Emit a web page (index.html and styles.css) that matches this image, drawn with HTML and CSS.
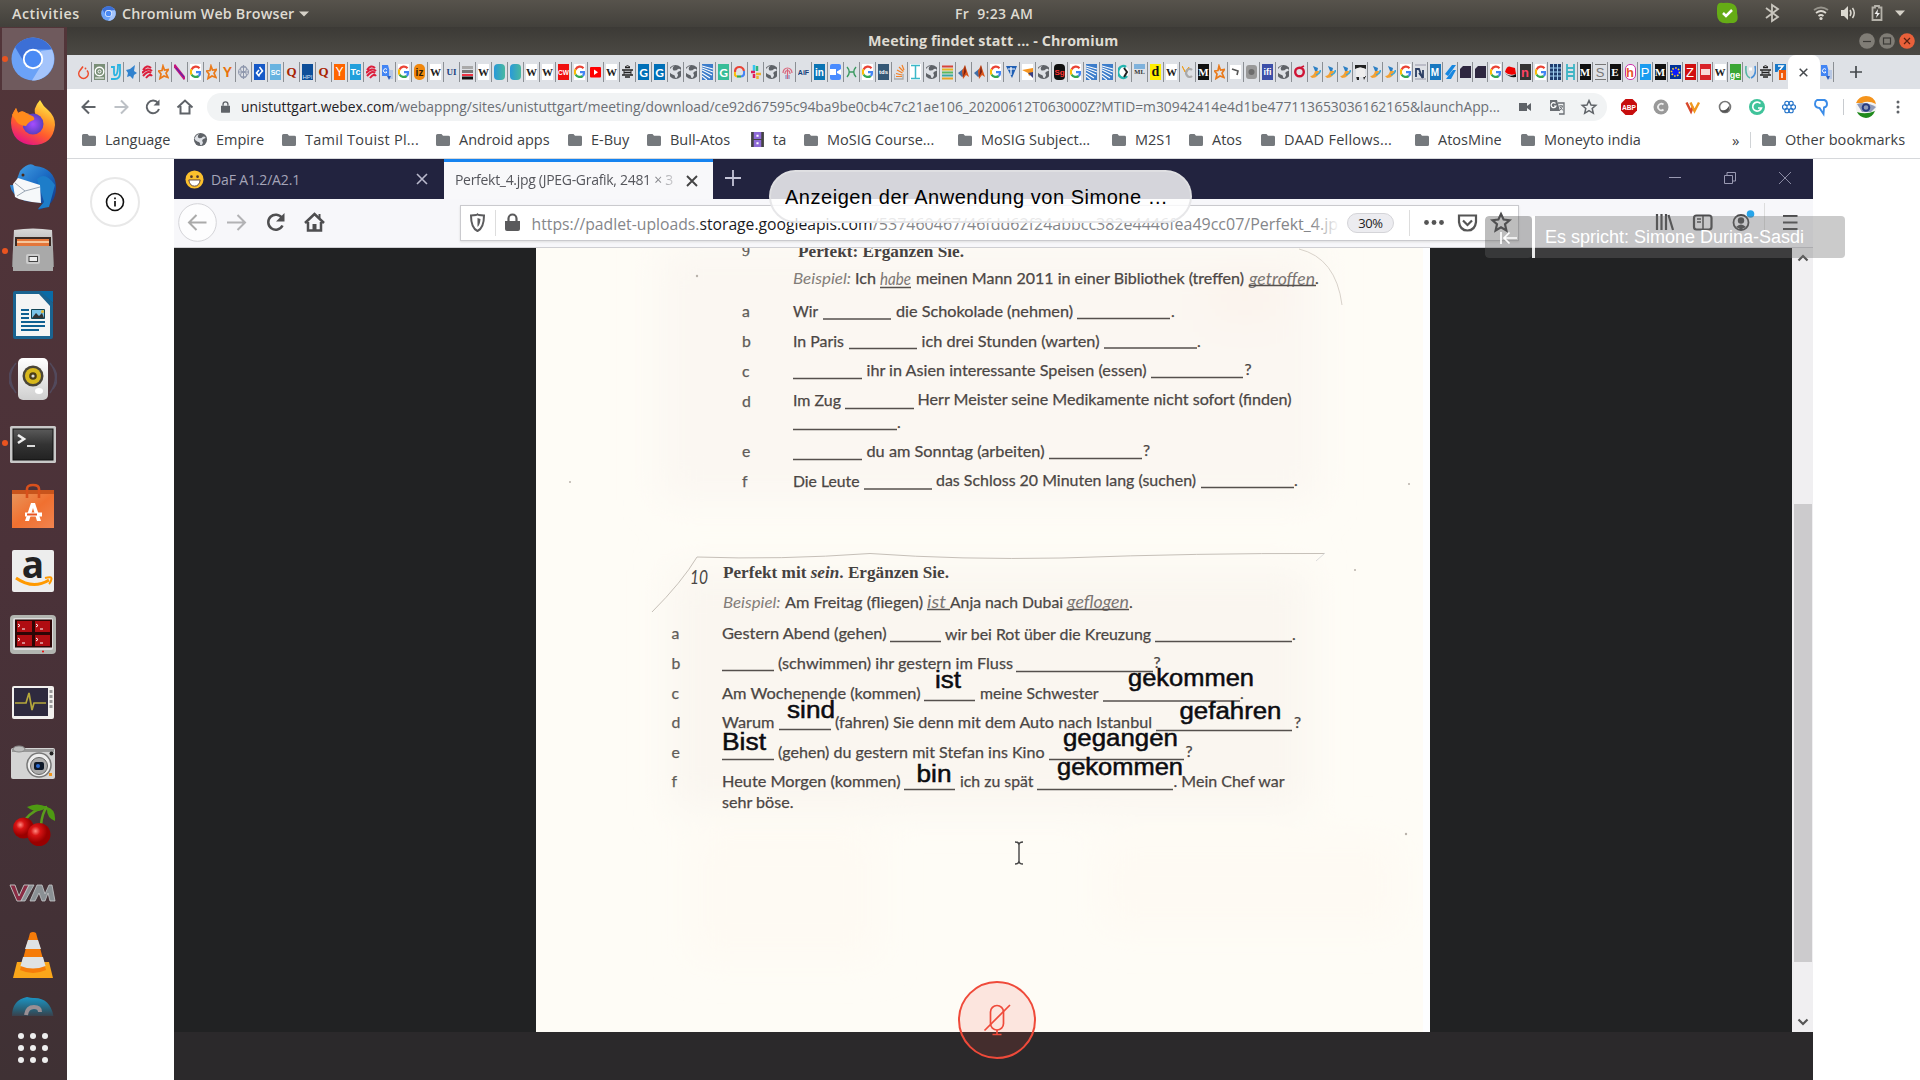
FILE: index.html
```html
<!DOCTYPE html>
<html lang="de">
<head>
<meta charset="utf-8">
<title>Meeting findet statt ... - Chromium</title>
<link rel="stylesheet" href="styles.css">
</head>
<body>
<svg class="defs" aria-hidden="true">
  <defs>
    <linearGradient id="gFox" x1="0.8" y1="0" x2="0.3" y2="1"><stop offset="0" stop-color="#fff44f"/><stop offset=".35" stop-color="#ffa02a"/><stop offset=".65" stop-color="#ff5a2e"/><stop offset="1" stop-color="#e3108a"/></linearGradient>
    <radialGradient id="gOrb"><stop offset="0" stop-color="#a64cff"/><stop offset="1" stop-color="#5a3fc0"/></radialGradient>
    <linearGradient id="gGrey" x1="0" y1="0" x2="0" y2="1"><stop offset="0" stop-color="#d8d8d8"/><stop offset="1" stop-color="#8e8e8e"/></linearGradient>
    <linearGradient id="gLight" x1="0" y1="0" x2="0" y2="1"><stop offset="0" stop-color="#fff"/><stop offset="1" stop-color="#cfcfcf"/></linearGradient>
    <linearGradient id="gDark" x1="0" y1="0" x2="0" y2="1"><stop offset="0" stop-color="#5a5a5a"/><stop offset=".5" stop-color="#333"/><stop offset="1" stop-color="#222"/></linearGradient>
    <linearGradient id="gBag" x1="0" y1="0" x2="1" y2="1"><stop offset="0" stop-color="#e8945a"/><stop offset=".5" stop-color="#f07030"/><stop offset="1" stop-color="#f08450"/></linearGradient>
    <linearGradient id="gBird" x1="0" y1="0" x2="1" y2="1"><stop offset="0" stop-color="#4aa8e8"/><stop offset=".5" stop-color="#1c6cc4"/><stop offset="1" stop-color="#14307c"/></linearGradient>
    <radialGradient id="gCherry" cx=".35" cy=".35"><stop offset="0" stop-color="#ff8a80"/><stop offset=".4" stop-color="#d81414"/><stop offset="1" stop-color="#900"/></radialGradient>
    <linearGradient id="gSkype" x1="0" y1="0" x2="0" y2="1"><stop offset="0" stop-color="#1c96c6"/><stop offset=".6" stop-color="#2a5d72"/><stop offset="1" stop-color="#433238"/></linearGradient>
    <linearGradient id="gTeal" x1="0" y1="0" x2="1" y2="0"><stop offset="0" stop-color="#2a9ad8"/><stop offset="1" stop-color="#48b8a0"/></linearGradient>
    <linearGradient id="gFade" x1="0" y1="0" x2="1" y2="0"><stop offset="0" stop-color="#fff" stop-opacity="0"/><stop offset="1" stop-color="#fff"/></linearGradient>

    <symbol id="chromium" viewBox="0 0 44 44"><circle cx="22" cy="22" r="21.5" fill="#6ba2f7"/><path d="M4 10A21.5 21.5 0 0 1 41 12.500L22 12.500 13.500 26Z" fill="#3c6fd6"/><path d="M40.800 12.500A21.500 21.500 0 0 1 21 43.500L31 27 30 14Z" fill="#a4c4fb"/><circle cx="22" cy="22" r="10.200" fill="#fff"/><circle cx="22" cy="22" r="8.300" fill="#4a8af4"/></symbol>
    <symbol id="folder" viewBox="0 0 14 12"><path d="M1.500 0H5.500L7 1.800H12.500Q14 1.800 14 3.200V10.500Q14 12 12.500 12H1.500Q0 12 0 10.500V1.500Q0 0 1.500 0Z" fill="#75797d"/></symbol>
    <symbol id="globe" viewBox="0 0 16 16" preserveAspectRatio="xMidYMid slice"><circle cx="8" cy="8" r="7" fill="#5f6368"/><path d="M7 1.500Q4 4 6 6.500 9 7 10.500 5 13 4 13.500 6.500 9 8 10 10 11.500 11 9 14L7.500 13.500Q8 11 5 10.500 2 9 1.500 7 3 3 7 1.500Z" fill="#dee1e6"/></symbol>

    <symbol id="f-flame" viewBox="0 0 11 16"><path d="M5 2.500L2 6.500A4.700 4.700 0 1 0 9 6.500" fill="none" stroke="#ee4c2c" stroke-width="1.600"/><circle cx="7.500" cy="4.500" r=".9" fill="#ee4c2c"/></symbol>
    <symbol id="f-swirl" viewBox="0 0 11 16"><path d="M0 0H11V16H0Z" fill="#7a8f78"/><circle cx="5.500" cy="7.500" r="4.300" fill="none" stroke="#fff" stroke-width="1.400"/><circle cx="5.500" cy="7.500" r="1.500" fill="none" stroke="#fff"/><path d="M1 14H10" stroke="#fff"/></symbol>
    <symbol id="f-u" viewBox="0 0 11 16"><path d="M1 3H4V9Q4 12 6 11 8 9 8 1H10V9Q10 15 5 15H1" fill="none" stroke="#2bb3e0" stroke-width="1.800"/></symbol>
    <symbol id="f-bird" viewBox="0 0 11 16"><path d="M0 6L4 5 9 1 8 7 11 9 8 11 7 15 4 12 1 13 2 9Z" fill="#3182ce"/></symbol>
    <symbol id="f-red" viewBox="0 0 11 16"><path d="M1 6Q5 0 9 4M0 9Q6 3 10 7M1 12Q6 6 9 9M4 14Q8 9 10 12" fill="none" stroke="#dc1f3c" stroke-width="2"/></symbol>
    <symbol id="f-star" viewBox="0 0 11 16"><path d="M5 2L6.500 6 10.500 5.500 8 9 10 13.500 6 12 2 14.500 3 10 .5 7 4 6.500Z" fill="none" stroke="#ea7a1a" stroke-width="1.700"/></symbol>
    <symbol id="f-feather" viewBox="0 0 11 16"><path d="M0 1L11 15" stroke="#c3147c" stroke-width="3"/><path d="M2 4L10 13" stroke="#3b2bc0"/></symbol>
    <symbol id="f-g" viewBox="0 0 11 16"><path d="M0 0H11V16H0Z" fill="#fff"/><g fill="none" stroke-width="2.200"><path d="M9.500 4.200A4.900 5.200 0 0 0 1.600 5.400" stroke="#ea4335"/><path d="M1.600 5.400A5 5 0 0 0 1.600 10.600" stroke="#fbbc05"/><path d="M1.600 10.600A5 5 0 0 0 8.800 12" stroke="#34a853"/><path d="M8.800 12A5 5 0 0 0 10 8.200H6" stroke="#4285f4"/></g></symbol>
    <symbol id="f-knot" viewBox="0 0 11 16"><circle cx="5.500" cy="8" r="5" fill="none" stroke="#8d96ac"/><circle cx="5.500" cy="5" r="3" fill="none" stroke="#8d96ac"/><circle cx="5.500" cy="11" r="3" fill="none" stroke="#8d96ac"/><path d="M5.500 1V15M1 8H10" stroke="#8d96ac"/></symbol>
    <symbol id="f-dia" viewBox="0 0 11 16"><path d="M0 0H11V16H0Z" fill="#1659c7"/><path d="M5.500 3L8.500 7 4 12M5 6L2.500 9 5.500 12.500" fill="none" stroke="#fff" stroke-width="1.600"/></symbol>
    <symbol id="f-sf" viewBox="0 0 11 16"><path d="M0 0H11V16H0Z" fill="#3d7dca"/><path d="M0 2L11 5M0 4L11 8M0 6L10 11M0 9L8 14M0 12L5 16" stroke="#fff" stroke-width="1.100"/></symbol>
    <symbol id="f-tr" viewBox="0 0 11 16"><path d="M0 1H6L9 12H0Z" fill="#4285f4"/><path d="M7 6H11V15H7Z" fill="#b7c7e4"/><path d="M5 12H9L7 16Z" fill="#2b5fc0"/><path d="M5 5.500A2 2 0 1 0 5 8H3.500" stroke="#fff" fill="none"/></symbol>
    <symbol id="f-bars" viewBox="0 0 11 16"><path d="M0 2H11V5H0Z" fill="#aaa"/><path d="M0 6H11V9H0Z" fill="#777"/><path d="M0 10H11V12H0Z" fill="#e34"/><path d="M0 12.500H11V15.500H0Z" fill="#111"/></symbol>
    <symbol id="f-teal" viewBox="0 0 11 16"><rect width="11" height="16" rx="4" fill="url(#gTeal)"/></symbol>
    <symbol id="f-yt" viewBox="0 0 11 16"><rect y="3" width="11" height="10.500" rx="1" fill="#f00"/><path d="M4 5.500L8 8.200 4 11Z" fill="#fff"/></symbol>
    <symbol id="f-bee" viewBox="0 0 11 16"><path d="M3 3.500H8M0 6H11M2 8.500H9M0 11H11M3 13H8" stroke="#222" stroke-width="1.300"/><path d="M3 3L5.500 1.500 8 3M2 6V11M9 6V11" stroke="#333" fill="none"/></symbol>
    <symbol id="f-cloud" viewBox="0 0 11 16"><path d="M1 8Q1 3 5.500 3 9 3 10 7" fill="none" stroke="#ea4335" stroke-width="2.200"/><path d="M1 8Q0 12 3 12.500" fill="none" stroke="#fbbc05" stroke-width="2.200"/><path d="M3 12.500H7" stroke="#34a853" stroke-width="2.200"/><path d="M7 12.500Q11 12 10 7" fill="none" stroke="#4285f4" stroke-width="2.200"/></symbol>
    <symbol id="f-slack" viewBox="0 0 11 16"><path d="M4 1V7" stroke="#36c5f0" stroke-width="2.500"/><path d="M7 7V2" stroke="#2eb67d" stroke-width="2.500"/><path d="M1 8H5M4 10V14" stroke="#e01e5a" stroke-width="2.500"/><path d="M6 10H11M7.500 12V15" stroke="#ecb22e" stroke-width="2.500"/></symbol>
    <symbol id="f-tree" viewBox="0 0 11 16"><path d="M1 9A4.500 5 0 1 1 10 9M3 10A2.500 3.500 0 1 1 8 10M5.500 5V15" fill="none" stroke="#d9667c" stroke-width="1.200"/><path d="M4 11V15M7 11V15" stroke="#7a7fc0"/></symbol>
    <symbol id="f-zoom" viewBox="0 0 11 16"><rect width="11" height="16" rx="2" fill="#4a8cff"/><path d="M0 5H6V11H0ZM7 7.500L11 5V11L7 9Z" fill="#fff"/></symbol>
    <symbol id="f-x" viewBox="0 0 11 16"><path d="M1 3Q5.500 8 1 13M10 3Q5.500 8 10 13M3 8H8" fill="none" stroke="#3c9a62" stroke-width="1.400"/></symbol>
    <symbol id="f-so" viewBox="0 0 11 16"><path d="M0 10V15H9V10" fill="none" stroke="#aaa" stroke-width="1.300"/><path d="M2 12.500H8M2 9.500L8 11M3 6L8.500 9M5 3L9.500 7.500M8 1L10 6" stroke="#f48024" stroke-width="1.200"/></symbol>
    <symbol id="f-i" viewBox="0 0 11 16"><path d="M0 0H11V16H0Z" fill="#fff"/><path d="M1 1.500H10M1 14.500H10M5.500 2V14" stroke="#3bb8c8" stroke-width="1.500"/></symbol>
    <symbol id="f-stack" viewBox="0 0 11 16"><path d="M0 2.500H11" stroke="#d8443a" stroke-width="2"/><path d="M0 5.500H11" stroke="#e6b422" stroke-width="2"/><path d="M0 8.500H11" stroke="#5cb85c" stroke-width="2"/><path d="M0 11.500H11" stroke="#3aa8a0" stroke-width="2"/><path d="M0 14.500H11" stroke="#e6a422" stroke-width="2"/></symbol>
    <symbol id="f-mat" viewBox="0 0 11 16"><path d="M0 9L5 5 6 12 4 13Z" fill="#3f6fa8"/><path d="M4 7L7 1 11 13 8 11 5 15Z" fill="#d9541a"/><path d="M7 1L8 8 5 13Z" fill="#7c2112"/></symbol>
    <symbol id="f-tri" viewBox="0 0 11 16"><path d="M0 2H11L6 14Z" fill="#1f5fb4"/><path d="M2 5H9M5 3V11" stroke="#fff" stroke-width="1.200"/></symbol>
    <symbol id="f-swoosh" viewBox="0 0 11 16"><path d="M0 0H11V16H0Z" fill="#fff"/><path d="M0 6L11 4V9L7 12 6 9Z" fill="#f5941f"/><path d="M6 9L11 8V14Z" fill="#3a3e80"/></symbol>
    <symbol id="f-moon" viewBox="0 0 11 16"><circle cx="5.500" cy="8" r="5.500" fill="#fff"/><path d="M8 3A5 6 0 1 0 9 12" stroke="#25b5b0" stroke-width="2.500" fill="none"/><path d="M6 4L9 8 6 13" stroke="#222" stroke-width="2" fill="none"/></symbol>
    <symbol id="f-yc" viewBox="0 0 11 16"><path d="M0 2L3 8 7 3 4 9Z" fill="#f0c020" stroke="#f0a020"/><path d="M10 6A3.500 4 0 1 0 10 12" fill="none" stroke="#aaa" stroke-width="2.200"/></symbol>
    <symbol id="f-white" viewBox="0 0 11 16"><path d="M0 1H11V15H0Z" fill="#fff"/><path d="M2 5L8 7 7 11" fill="none" stroke="#555" stroke-width="1.600"/></symbol>
    <symbol id="f-blot" viewBox="0 0 11 16"><rect y="1" width="11" height="14" rx="3" fill="#999"/><circle cx="5.500" cy="8" r="3" fill="#6d6d6d"/></symbol>
    <symbol id="f-o" viewBox="0 0 11 16"><circle cx="5.500" cy="8" r="4.300" fill="none" stroke="#cf1434" stroke-width="2.400"/><path d="M6 4L10 2" stroke="#cf1434" stroke-width="1.500"/></symbol>
    <symbol id="f-duck" viewBox="0 0 11 16"><path d="M3 2L8 4 7 8 5 7Z" fill="#2c7fc4"/><path d="M0 12Q4 12 5 7L9 7Q9 14 2 14Z" fill="#f2a033"/><path d="M6 11Q10 10 10.500 6" stroke="#3ba7d8" stroke-width="1.800" fill="none"/></symbol>
    <symbol id="f-panda" viewBox="0 0 11 16"><path d="M0 1H11V5Q5 2 0 5ZM1 12H4V16H2ZM8 12H11L9 16Z" fill="#222"/><path d="M1 5Q5 2 10 5V13H1Z" fill="#eee"/></symbol>
    <symbol id="f-in2" viewBox="0 0 11 16"><path d="M0 1H11M0 15H11" stroke="#99a" stroke-width="1"/><path d="M1 13V5H4L7 13H8V6M4 9L8 14" fill="none" stroke="#2c3e63" stroke-width="1.800"/></symbol>
    <symbol id="f-zz" viewBox="0 0 11 16"><path d="M0 10L7 1H11L3 12ZM1 15L8 6H11L6 15Z" fill="#1787e0"/></symbol>
    <symbol id="f-fold" viewBox="0 0 11 16"><path d="M0 5L3 2H11V14H0Z" fill="#2e2740"/></symbol>
    <symbol id="f-hat" viewBox="0 0 11 16"><path d="M0 8Q2 1 6 3L10 4 11 10Q4 12 0 8Z" fill="#e00"/><path d="M0 9Q5 14 11 10V13Q4 14 0 9Z" fill="#111"/></symbol>
    <symbol id="f-grid" viewBox="0 0 11 16"><path d="M0 0H11V16H0Z" fill="#1f3d6e"/><path d="M0 4H11M0 8H11M0 12H11M3.500 0V16M7.500 0V16" stroke="#9fd0f0" stroke-width="1"/></symbol>
    <symbol id="f-ladder" viewBox="0 0 11 16"><path d="M2 0V16M9 0V16M2 4H9M2 8H9M2 12H9" stroke="#3fb5c5" stroke-width="1.800"/></symbol>
    <symbol id="f-eu" viewBox="0 0 11 16"><path d="M0 1H11V15H0Z" fill="#039"/><circle cx="5.500" cy="8" r="4" fill="#0a1cff" stroke="#ffdb28" stroke-width="1.700" stroke-dasharray="1.500 1.500"/></symbol>
    <symbol id="f-rb" viewBox="0 0 11 16"><path d="M0 0H11V16H0Z" fill="#d8232a"/><path d="M1 5H10V11H1Z" fill="#f7dada"/></symbol>
    <symbol id="f-arc" viewBox="0 0 11 16"><path d="M1 2Q0 12 5 14" stroke="#55b5a5" fill="none" stroke-width="1.600"/><path d="M10 2Q12 11 6 14" stroke="#4a90d8" fill="none" stroke-width="1.600"/><path d="M4 5L7 5" stroke="#fff" stroke-width="3"/></symbol>
    <symbol id="f-zo" viewBox="0 0 11 16"><path d="M0 0H11V8H0Z" fill="#1878c8"/><path d="M3 2H8L4 7H9" stroke="#fff" stroke-width="1.500" fill="none"/><path d="M4 6H11V16H4Z" fill="#f05a0a"/><path d="M7 9V14" stroke="#fff" stroke-width="1.500"/></symbol>
  </defs>
</svg>

<div class="desktop">
  <header class="topbar">
    <span class="activities">Activities</span>
    <svg class="app-ico"><use href="#chromium"/></svg>
    <span class="appname">Chromium Web Browser</span>
    <svg class="caret" viewBox="0 0 10 6"><path d="M0 .5H10L5 5.500Z" fill="#d5d1c8"/></svg>
    <span class="clock">Fr&nbsp; 9:23 AM</span>
    <svg class="tray" viewBox="1712 0 208 27">
      <path d="M1717 8Q1717 2 1723 3 1738 1 1737 13 1740 24 1730 23 1717 25 1717 14Z" fill="#65ac16"/><path d="M1723 13L1726 16 1732 10" stroke="#fff" stroke-width="2.500" fill="none"/>
      <path d="M1766 8L1778 17 1772 21V5L1778 9 1766 18" fill="none" stroke="#c9c6be" stroke-width="1.800"/>
      <g fill="none" stroke="#dcd9d1" stroke-width="1.800"><path d="M1814 10Q1821 5 1828 10" stroke="#97948c"/><path d="M1816 13Q1821 9 1826 13M1818.500 16Q1821 14 1823.500 16"/></g><circle cx="1821" cy="18.500" r="1.600" fill="#dcd9d1"/>
      <path d="M1841 10H1844L1848 6V20L1844 16H1841Z" fill="#dcd9d1"/><path d="M1850 10Q1852 13 1850 16M1852.500 8Q1856 13 1852.500 18" stroke="#dcd9d1" stroke-width="1.500" fill="none"/>
      <path d="M1872.500 7.500H1875V6H1879V7.500H1881.500V20H1872.500Z" fill="none" stroke="#b5b2aa" stroke-width="1.800"/><path d="M1878 9L1874.500 14H1877L1876 18 1880 13H1877.500Z" fill="#eee"/>
      <path d="M1895 10.500H1905L1900 16Z" fill="#d5d1c8"/>
    </svg>
  </header>

  <nav class="dock">
    <div class="dock-list">
      <div class="dock-item active running"><svg viewBox="0 0 48 48"><use href="#chromium" x="2" y="2" width="44" height="44"/></svg></div>
      <div class="dock-item"><svg viewBox="0 0 48 48"><path d="M24 46Q3 45 2 24 2 16 7 9L9 14Q13 11 17 14L27 17Q23 10 31 1 34 7 39 11 46 17 46 26 44 46 24 46Z" fill="url(#gFox)"/><circle cx="24" cy="25" r="10.500" fill="url(#gOrb)"/><path d="M3 16L7 9 9 14Q14 10 18 15 27 17 25 21 20 22 17 27 9 27 6 20Z" fill="#ff8a1c"/></svg></div>
      <div class="dock-item"><svg viewBox="0 0 48 48"><path d="M11 8Q20-2 26 3 46 5 47 24 47 43 29 47L34 40 16 38Q2 32 1 22 7 23 8 16Z" fill="url(#gBird)"/><path d="M28 16Q36 8 46 22L40 44 29 46 35 39Z" fill="#1d7dc9"/><path d="M4 21L9 15 31 22 32 40Q12 38 6 34Z" fill="#f6f8fa"/><path d="M6 20L16 28 31 24M16 28L8 33" fill="none" stroke="#9aa6b4"/><circle cx="14" cy="12" r="1.500" fill="#4a2a18"/></svg></div>
      <div class="dock-item running"><svg viewBox="0 0 48 48"><path d="M5 3Q24 0 43 3L45 40H3Z" fill="url(#gGrey)"/><path d="M6 10H42V20H6Z" fill="#3a2a24"/><path d="M8 12H40V20H8Z" fill="#e4763a"/><path d="M8 15H40" stroke="#fbe0bc" stroke-width="1.500"/><path d="M4 19H44V44H4Z" fill="#a9a9a9"/><rect x="17" y="27" width="14" height="10" rx="2" fill="#ccc"/><rect x="20" y="29.500" width="8.500" height="5" fill="#eee" stroke="#444"/></svg></div>
      <div class="dock-item"><svg viewBox="0 0 48 48"><path d="M6 0H32L44 12V46Q44 48 42 48H6Q4 48 4 46V2Q4 0 6 0Z" fill="#1a6390"/><path d="M7 3H30L41 15V45H7Z" fill="#f4f4f4"/><path d="M31 0H44V12Z" fill="#0a6ba6"/><path d="M12 19H20M12 23H20M12 27H20M12 31H36M12 35H36M12 39H30" stroke="#0f5f91" stroke-width="2"/><path d="M22.500 18.500H35.500V27.500H22.500Z" fill="#7cc4e8" stroke="#145" /><path d="M23 27L27 22 30 25 33 22 35 27Z" fill="#333"/><circle cx="33.500" cy="20.500" r="1.500" fill="#e5b932"/></svg></div>
      <div class="dock-item"><svg viewBox="0 0 48 48"><path d="M7 8Q-4 22 7 38M41 8Q52 22 41 38M4 12Q-4 24 4 34M44 12Q52 24 44 34" fill="none" stroke="#5a6c92" stroke-width="1.500" opacity=".4"/><rect x="9" y="3" width="30" height="42" rx="5" fill="url(#gLight)"/><circle cx="24" cy="21" r="10.500" fill="#4a4638"/><circle cx="24" cy="21" r="8" fill="#d8b81c"/><circle cx="24" cy="21" r="3.800" fill="#4a3d18"/><circle cx="24" cy="21" r="1.600" fill="#ddd"/><ellipse cx="30" cy="36" rx="4" ry="3" fill="#fff"/></svg></div>
      <div class="dock-item running"><svg viewBox="0 0 48 48"><rect x="1" y="7" width="46" height="37" rx="1.500" fill="#c8c8c8"/><rect x="4" y="10" width="40" height="31" fill="url(#gDark)" stroke="#111"/><path d="M9 16L15 20 9 24" fill="none" stroke="#eee" stroke-width="2.600"/><path d="M18 27H26" stroke="#eee" stroke-width="1.800"/></svg></div>
      <div class="dock-item"><svg viewBox="0 0 48 48"><path d="M3 7H45V12H3Z" fill="#c8541c"/><path d="M3 11H45V45H3Z" fill="url(#gBag)"/><path d="M18 15V6Q18 2 24 2 30 2 30 6V15" fill="none" stroke="#d8501c" stroke-width="2.600"/><path d="M16 38L22 20H26L32 38H28L24 25 20 38Z" fill="#fff"/><path d="M16 31.500H33" stroke="#fff" stroke-width="4"/><path d="M18 31.500H28" stroke="#e95420" stroke-width="2"/></svg></div>
      <div class="dock-item"><svg viewBox="0 0 48 48"><rect x="3" y="3" width="42" height="42" rx="2" fill="#ededed"/><text x="24" y="31" text-anchor="middle" font-size="37" font-weight="700" fill="#222" font-family="Open Sans, sans-serif">a</text><path d="M7 31Q24 43 40 33" fill="none" stroke="#f90" stroke-width="3"/><path d="M36 31Q43 29 42.500 32T40 37" fill="none" stroke="#f90" stroke-width="2"/></svg></div>
      <div class="dock-item"><svg viewBox="0 0 48 48"><rect x="1" y="4" width="46" height="39" rx="4" fill="#b2b5b0"/><rect x="4" y="7" width="40" height="32" rx="2" fill="#ddd"/><rect x="6" y="8.500" width="37" height="28" fill="#2c0606"/><path d="M8 10H23V21H8ZM26 10H41V21H26ZM8 24H23V35H8ZM26 24H41V35H26Z" fill="#b00d12"/><path d="M9 13L11 14.500 9 16M13 18H16M27 13L29 14.500 27 16M31 18H34M9 27L11 28.500 9 30M13 32H16M27 27L29 28.500 27 30M31 32H34" stroke="#fff" fill="none"/><circle cx="34" cy="40.500" r="1" fill="#e00"/></svg></div>
      <div class="dock-item"><svg viewBox="0 0 48 48"><rect x="3" y="11" width="42" height="33" rx="2" fill="#f2f0ee"/><rect x="5" y="13" width="34" height="28" fill="#2e2a3e"/><path d="M6 28H17L20 18 23 35 25 28H37" fill="none" stroke="#b5a83c" stroke-width="1.700"/><path d="M42 15V35" stroke="#999" stroke-width="3" stroke-dasharray="3 2"/></svg></div>
      <div class="dock-item"><svg viewBox="0 0 48 48"><rect x="2" y="9" width="44" height="31" rx="2" fill="#d4d4d4"/><path d="M3 10H45V13H3Z" fill="#999"/><ellipse cx="10" cy="10" rx="6" ry="3" fill="#bbb" stroke="#888"/><circle cx="30" cy="26" r="12" fill="#eee" stroke="#777" stroke-width="1.500"/><circle cx="30" cy="27" r="8.500" fill="#aaa" stroke="#666"/><rect x="25" y="23" width="10" height="8" rx="2" fill="#0d1828"/><circle cx="29" cy="27" r="2" fill="#2a6ad0"/><circle cx="42.500" cy="14.500" r="2" fill="#222"/><path d="M40 34H43V37H40Z" fill="#f0941c"/></svg></div>
      <div class="dock-item"><svg viewBox="0 0 48 48"><path d="M16 17Q24 6 38 4M32 22Q33 10 38 4" fill="none" stroke="#5a9c1c" stroke-width="2.600"/><path d="M18 4Q28-1 38 4 28 12 18 4ZM38 4Q47 6 46 18 37 15 38 4Z" fill="#4e9a12"/><circle cx="14.500" cy="25" r="10.500" fill="url(#gCherry)"/><circle cx="30" cy="31.500" r="11.500" fill="url(#gCherry)"/></svg></div>
      <div class="dock-item"><svg viewBox="0 0 48 48"><path d="M1 18H6L10 29 15 18H20L12 34H8Z" fill="#8a2c44" stroke="#bbb"/><path d="M20 18H25L16 34H12ZM21 34L28 18H33L36 27 40 18H43L46 34H41L39 26 36 34H33L30 26 26 34Z" fill="#8a9094" stroke="#c5c8ca" stroke-width=".8"/></svg></div>
      <div class="dock-item"><svg viewBox="0 0 48 48"><path d="M8 31H40L44 47H4Z" fill="#faa61a"/><path d="M21 2Q24 0 27 2L37 39Q24 45 11 39Z" fill="#f57c0a"/><path d="M19 9H29L32 18H16ZM14 26H34L36.500 35Q24 40 11.500 35Z" fill="#dfe2e4"/></svg></div>
      <div class="dock-item"><svg viewBox="0 0 48 48"><path d="M3 24Q2 5 18 2 22 3 24 3 42 2 45 24Z" fill="url(#gSkype)"/><path d="M17 20Q18 12 25 12 31 12 31 17" fill="none" stroke="#9a8f94" stroke-width="4"/></svg></div>
    </div>
    <div class="apps"><i></i><i></i><i></i><i></i><i></i><i></i><i></i><i></i><i></i></div>
  </nav>

  <main class="browser">
    <div class="titlebar">
      <span class="win-title">Meeting findet statt ... - Chromium</span>
      <div class="win-btns">
        <svg viewBox="0 0 16 16"><circle cx="8" cy="8" r="7.800" fill="#807d76"/><path d="M4 8.500H12" stroke="#3c3b37" stroke-width="1.200"/></svg>
        <svg viewBox="0 0 16 16"><circle cx="8" cy="8" r="7.800" fill="#807d76"/><rect x="4.500" y="5" width="7" height="6" fill="none" stroke="#3c3b37" stroke-width="1.200"/></svg>
        <svg viewBox="0 0 16 16"><circle cx="8" cy="8" r="7.800" fill="#e9603a"/><path d="M5 5L11 11M11 5L5 11" stroke="#5a2010" stroke-width="1.200"/></svg>
      </div>
    </div>

    <div class="tabstrip">
      <div class="tabs wide">
        <i><svg><use href="#f-flame"/></svg></i><i><svg><use href="#f-swirl"/></svg></i><i><svg><use href="#f-u"/></svg></i><i><svg><use href="#f-bird"/></svg></i><i><svg><use href="#f-red"/></svg></i><i><svg><use href="#f-star"/></svg></i><i><svg><use href="#f-feather"/></svg></i><i><svg><use href="#f-g"/></svg></i><i><svg><use href="#f-star"/></svg></i><i><b class="y1">Y</b></i>
        <i><svg><use href="#f-knot"/></svg></i><i><svg><use href="#f-dia"/></svg></i><i><b class="sc">SC</b></i><i><b class="q">Q</b></i><i><b class="hpi">HPI</b></i><i><b class="q">Q</b></i><i><b class="y2">Y</b></i><i><b class="tc">Tc</b></i><i><svg><use href="#f-red"/></svg></i><i><svg><use href="#f-tr"/></svg></i>
        <i><svg><use href="#f-g"/></svg></i><i><b class="lz">iz</b></i><i><b class="w">W</b></i><i><b class="ui">UI</b></i><i><svg><use href="#f-bars"/></svg></i><i><b class="w">W</b></i><i><svg><use href="#f-teal"/></svg></i><i><svg><use href="#f-teal"/></svg></i><i><b class="w">W</b></i><i><b class="w">W</b></i>
        <i><b class="cw">CW</b></i><i><svg><use href="#f-g"/></svg></i><i><svg><use href="#f-yt"/></svg></i><i><b class="w">W</b></i><i><svg><use href="#f-bee"/></svg></i><i><b class="gb">G</b></i><i><b class="gb">G</b></i><i><svg><use href="#globe"/></svg></i><i><svg><use href="#globe"/></svg></i><i><svg><use href="#f-sf"/></svg></i>
        <i><b class="gt">G</b></i><i><svg><use href="#f-cloud"/></svg></i><i><svg><use href="#f-slack"/></svg></i><i><svg><use href="#globe"/></svg></i><i><svg><use href="#f-tree"/></svg></i><i><b class="aif">AiF</b></i><i><b class="li">in</b></i><i><svg><use href="#f-zoom"/></svg></i><i><svg><use href="#f-x"/></svg></i><i><svg><use href="#f-g"/></svg></i>
        <i><b class="tds">tds</b></i><i><svg><use href="#f-so"/></svg></i><i><svg><use href="#f-i"/></svg></i><i><svg><use href="#globe"/></svg></i><i><svg><use href="#f-stack"/></svg></i><i><svg><use href="#f-mat"/></svg></i><i><svg><use href="#f-mat"/></svg></i><i><svg><use href="#f-g"/></svg></i><i><svg><use href="#f-tri"/></svg></i><i><svg><use href="#f-swoosh"/></svg></i>
        <i><svg><use href="#globe"/></svg></i><i><b class="sg">Sg</b></i><i><svg><use href="#f-g"/></svg></i><i><svg><use href="#f-sf"/></svg></i><i><svg><use href="#f-sf"/></svg></i><i><svg><use href="#f-moon"/></svg></i><i><b class="ml">ML</b></i><i><b class="d">d</b></i><i><b class="w">W</b></i><i><svg><use href="#f-yc"/></svg></i>
        <i><b class="m">M</b></i><i><svg><use href="#f-star"/></svg></i><i><svg><use href="#f-white"/></svg></i><i><svg><use href="#f-blot"/></svg></i><i><b class="ifi">ifi</b></i><i><svg><use href="#globe"/></svg></i><i><svg><use href="#f-o"/></svg></i>
      </div>
      <div class="tabs narrow">
        <i><svg><use href="#f-duck"/></svg></i><i><svg><use href="#f-duck"/></svg></i><i><svg><use href="#f-duck"/></svg></i><i><svg><use href="#f-panda"/></svg></i><i><svg><use href="#f-duck"/></svg></i><i><svg><use href="#f-duck"/></svg></i><i><svg><use href="#f-g"/></svg></i><i><svg><use href="#f-in2"/></svg></i><i><b class="mb">M</b></i><i><svg><use href="#f-zz"/></svg></i>
        <i><svg><use href="#f-fold"/></svg></i><i><svg><use href="#f-fold"/></svg></i><i><svg><use href="#f-g"/></svg></i><i><svg><use href="#f-hat"/></svg></i><i><b class="n">n</b></i><i><svg><use href="#f-g"/></svg></i><i><svg><use href="#f-grid"/></svg></i><i><svg><use href="#f-ladder"/></svg></i><i><b class="m">M</b></i><i><b class="s">S</b></i>
        <i><b class="m">E</b></i><i><b class="h">h</b></i><i><b class="p">P</b></i><i><b class="m">M</b></i><i><svg><use href="#f-eu"/></svg></i><i><b class="z">Z</b></i><i><svg><use href="#f-rb"/></svg></i><i><b class="w">W</b></i><i><b class="ge">ge</b></i><i><svg><use href="#f-arc"/></svg></i><i><svg><use href="#f-bee"/></svg></i><i><svg><use href="#f-zo"/></svg></i>
      </div>
      <div class="tab-active"><svg viewBox="0 0 9 9"><path d="M.7 .7L8.300 8.300M8.300 .7L.7 8.300" stroke="#45494d" stroke-width="1.500"/></svg></div>
      <div class="tabs last"><i><svg><use href="#f-tr"/></svg></i></div>
      <svg class="newtab" viewBox="0 0 12 12"><path d="M6 0V12M0 6H12" stroke="#45494d" stroke-width="1.700"/></svg>
    </div>

    <div class="toolbar">
      <svg viewBox="0 0 32 32"><path d="M22.500 16H10M16 9.500L9.500 16 16 22.500" fill="none" stroke="#5f6368" stroke-width="2"/></svg>
      <svg viewBox="0 0 32 32"><path d="M9.500 16H22M16 9.500L22.500 16 16 22.500" fill="none" stroke="#bdc1c6" stroke-width="2"/></svg>
      <svg viewBox="0 0 32 32"><path d="M21 12A6.300 6.300 0 1 0 22 18" fill="none" stroke="#5f6368" stroke-width="2"/><path d="M22.500 8.500V14.500H16.500Z" fill="#5f6368"/></svg>
      <svg viewBox="0 0 32 32"><path d="M8.500 16.500L16 9.500 23.500 16.500M11.500 15V22.500H20.500V15" fill="none" stroke="#5f6368" stroke-width="2"/></svg>
      <div class="omnibox">
        <svg class="lock" viewBox="0 0 10 13"><path d="M0 5H10V12Q10 13 9 13H1Q0 13 0 12Z" fill="#5f6368"/><path d="M2.300 5V3.500A2.700 2.700 0 0 1 7.700 3.500V5" fill="none" stroke="#5f6368" stroke-width="1.500"/></svg>
        <svg class="url" viewBox="0 0 1264 28"><text class="url-text" x="0" y="19" textLength="1259" lengthAdjust="spacingAndGlyphs"><tspan class="host">unistuttgart.webex.com</tspan>/webappng/sites/unistuttgart/meeting/download/ce92d67595c94ba9be0cb4c7c21ae106_20200612T063000Z?MTID=m30942414e4d1be477113653036162165&amp;launchApp...</text></svg>
        <svg viewBox="0 0 32 32"><path d="M10 12H18V20H10ZM18 15L22 12V20L18 17Z" fill="#5f6368"/></svg>
        <svg viewBox="0 0 32 32"><path d="M9 9H16L19 20H9Z" fill="#6a6e73"/><path d="M17 12H23V23H18" fill="none" stroke="#6a6e73" stroke-width="1.300"/><path d="M14.500 12.500A2.500 2.500 0 1 0 15 15H13" fill="none" stroke="#fff" stroke-width="1.200"/><path d="M18 15H22M20 14V15M21.500 15Q21 18 18.500 19.500M19 16L22 19.500" fill="none" stroke="#6a6e73"/></svg>
        <svg viewBox="0 0 32 32"><path d="M16 9.500L18 14 22.800 14.400 19.200 17.500 20.300 22.300 16 19.700 11.700 22.300 12.800 17.500 9.200 14.400 14 14Z" fill="none" stroke="#5f6368" stroke-width="1.500"/></svg>
      </div>
      <svg viewBox="0 0 32 32"><path d="M12.500 8H19.500L24 12.500V19.500L19.500 24H12.500L8 19.500V12.500Z" fill="#c70d0d"/><text x="9" y="19.200" font-size="8" font-weight="700" fill="#fff" font-family="Liberation Sans, sans-serif" textLength="14" lengthAdjust="spacingAndGlyphs">ABP</text></svg>
      <svg viewBox="0 0 32 32"><circle cx="16" cy="16" r="7.500" fill="#999"/><path d="M18.500 13.500A3.300 3.300 0 1 0 18.500 18.500" fill="none" stroke="#eee" stroke-width="1.700"/></svg>
      <svg viewBox="0 0 32 32"><path d="M9.500 11.500L14 20.500 16 15.500" fill="none" stroke="#d8472b" stroke-width="2.400"/><path d="M13.500 11.500L17.500 20 22 11.500" fill="none" stroke="#f0981e" stroke-width="2.400"/></svg>
      <svg viewBox="0 0 32 32"><circle cx="16" cy="16" r="5.500" fill="#fff" stroke="#777" stroke-width="1.600"/><path d="M20.500 14Q21 20 17 21.500 12.500 22 11 18.500 17 21.500 20.500 14Z" fill="#555"/></svg>
      <svg viewBox="0 0 32 32"><circle cx="16" cy="16" r="8" fill="#3fc39a"/><path d="M19.500 12.500A4.500 4.500 0 1 0 20.500 17H17" fill="none" stroke="#fff" stroke-width="1.700"/></svg>
      <svg viewBox="0 0 32 32"><g fill="none" stroke="#1f70c8" stroke-width="1.100"><circle cx="11.800" cy="16" r="2.300"/><circle cx="20.200" cy="16" r="2.300"/><circle cx="13.900" cy="12.300" r="2.100"/><circle cx="18.100" cy="12.300" r="2.100"/><circle cx="13.900" cy="19.700" r="2.100"/><circle cx="18.100" cy="19.700" r="2.100"/></g></svg>
      <svg viewBox="0 0 32 32"><path d="M12 9H19.500Q22 10 22 13 22 16 19 16.500L18.500 23 14.500 17Q10 16.500 10 13 10 10 12 9Z" fill="none" stroke="#3b8ce8" stroke-width="1.900"/></svg>
      <span class="tool-sep"></span>
      <svg class="avatar" viewBox="0 0 24 24"><circle cx="12" cy="12" r="10.500" fill="#f4f4f4"/><path d="M2 8Q5 1 12 1 20 1 22 9Q14 5 8 8Z" fill="#f5941c"/><path d="M3 17Q12 20 21 16 18 23 12 23 5 22 3 17Z" fill="#1f8a1c"/><path d="M3 9Q12 6 22 12L17 17H8Z" fill="#8f9ab8"/><circle cx="12" cy="12.500" r="3.300" fill="none" stroke="#273a80" stroke-width="2"/></svg>
      <svg viewBox="0 0 32 32"><circle cx="16" cy="11" r="1.500" fill="#5f6368"/><circle cx="16" cy="16" r="1.500" fill="#5f6368"/><circle cx="16" cy="21" r="1.500" fill="#5f6368"/></svg>
    </div>

    <div class="bookmarks">
      <a class="bk w111"><svg><use href="#folder"/></svg><span>Language</span></a>
      <a class="bk w89"><svg class="glb"><use href="#globe"/></svg><span>Empire</span></a>
      <a class="bk w154"><svg><use href="#folder"/></svg><span class="wide-label">Tamil Touist Pl...</span></a>
      <a class="bk w132"><svg><use href="#folder"/></svg><span>Android apps</span></a>
      <a class="bk w79"><svg><use href="#folder"/></svg><span>E-Buy</span></a>
      <a class="bk w103"><svg><use href="#folder"/></svg><span>Bull-Atos</span></a>
      <a class="bk w54"><svg class="glb" viewBox="0 0 14 14"><path d="M1 0H13V14H1Z" fill="#444"/><path d="M3.500 0H10.500V6.500H3.500ZM3.500 7.500H10.500V14H3.500Z" fill="#8e6ad8"/><path d="M6 2.500H8V4.500H6ZM6 9.500H8V11.500H6Z" fill="#fff"/></svg><span>ta</span></a>
      <a class="bk w154"><svg><use href="#folder"/></svg><span>MoSIG Course...</span></a>
      <a class="bk w154"><svg><use href="#folder"/></svg><span>MoSIG Subject...</span></a>
      <a class="bk w77"><svg><use href="#folder"/></svg><span>M2S1</span></a>
      <a class="bk w72"><svg><use href="#folder"/></svg><span>Atos</span></a>
      <a class="bk w154"><svg><use href="#folder"/></svg><span class="wide-label">DAAD Fellows...</span></a>
      <a class="bk w106"><svg><use href="#folder"/></svg><span>AtosMine</span></a>
      <a class="bk grow"><svg><use href="#folder"/></svg><span>Moneyto india</span></a>
      <span class="more">»</span>
      <a class="bk other"><svg><use href="#folder"/></svg><span>Other bookmarks</span></a>
    </div>

    <section class="meeting">
      <button class="info" aria-label="Info"><svg viewBox="0 0 20 20"><circle cx="10" cy="10" r="8.500" fill="none" stroke="#111" stroke-width="1.600"/><path d="M10 9V14.500M10 5.500V7.300" stroke="#111" stroke-width="1.700"/></svg></button>

      <div class="share">
        <div class="ff-tabs">
          <div class="ff-tab">
            <svg class="emoji" viewBox="0 0 20 20"><circle cx="10" cy="10" r="9.500" fill="#fbc02d"/><circle cx="6.800" cy="7" r="1.400" fill="#4e342e"/><circle cx="13.200" cy="7" r="1.400" fill="#4e342e"/><path d="M4 10.500H16Q15 17 10 17 5 17 4 10.500Z" fill="#fff" stroke="#5d4037"/></svg>
            <span>DaF A1.2/A2.1</span>
            <svg class="x" viewBox="0 0 12 12"><path d="M1 1L11 11M11 1L1 11" stroke="#b9b9cc" stroke-width="1.600"/></svg>
          </div>
          <div class="ff-tab on">
            <span>Perfekt_4.jpg (JPEG-Grafik, 2481 × 3</span>
            <svg class="x" viewBox="0 0 12 12"><path d="M1 1L11 11M11 1L1 11" stroke="#444" stroke-width="1.900"/></svg>
          </div>
          <svg class="plus" viewBox="0 0 16 16"><path d="M8 0V16M0 8H16" stroke="#c5c5d8" stroke-width="1.800"/></svg>
          <div class="ff-win">
            <svg viewBox="0 0 14 14"><path d="M1 6.500H13" stroke="#9a9ab2"/></svg>
            <svg viewBox="0 0 14 14"><path d="M1.500 4.500H9.500V12.500H1.500ZM4 4V1.500H12.500V10H10" fill="none" stroke="#9a9ab2"/></svg>
            <svg viewBox="0 0 14 14"><path d="M1 1L13 13M13 1L1 13" stroke="#8a8aa2"/></svg>
          </div>
        </div>

        <div class="ff-nav">
          <svg class="ff-btn back" viewBox="0 0 39 39"><circle cx="19.500" cy="19.500" r="18.800" fill="#fdfdfe" stroke="#d4d4d8"/><path d="M28.500 19.500H11M18.500 12L11 19.500 18.500 27" fill="none" stroke="#aaa" stroke-width="2"/></svg>
          <svg class="ff-btn" viewBox="0 0 39 39"><path d="M10 19.500H28M20.500 12L28 19.500 20.500 27" fill="none" stroke="#b2b2b4" stroke-width="2"/></svg>
          <svg class="ff-btn" viewBox="0 0 39 39"><path d="M26 15A7.500 7.500 0 1 0 26.500 22.500" fill="none" stroke="#4e4e50" stroke-width="2.500"/><path d="M28.500 10V18.500H20Z" fill="#4e4e50"/></svg>
          <svg class="ff-btn" viewBox="0 0 39 39"><path d="M10 20L19.500 11 29 20M13 19V27.500H26V19" fill="none" stroke="#4e4e50" stroke-width="2.500"/><path d="M17.500 21H21.500V28H17.500Z" fill="#4e4e50"/><path d="M24.500 11V15" stroke="#4e4e50" stroke-width="2"/></svg>
          <div class="ff-url">
            <svg class="ff-addr" viewBox="461 206 880 34">
              <path d="M471 215.500Q477 215 477.500 214.500 478 215 484 215.500 484 228 477.500 231 471 228 471 215.500Z" fill="none" stroke="#5c5c5e" stroke-width="2"/><path d="M477.500 218Q480.500 219 480.500 219 480 225 477.500 227Z" fill="#5c5c5e"/>
              <path d="M495.500 210V236" stroke="#ddd"/>
              <path d="M505 221H520V229Q520 231 518 231H507Q505 231 505 229Z" fill="#5a5a5c"/><path d="M508.500 221V218.500A4 4 0 0 1 516.500 218.500V221" fill="none" stroke="#5a5a5c" stroke-width="2.200"/>
              <g class="ff-url-text"><text x="531.500" y="229.500" textLength="168" lengthAdjust="spacingAndGlyphs">https://padlet-uploads.</text><text class="dom" x="699.500" y="229.500" textLength="173" lengthAdjust="spacingAndGlyphs">storage.googleapis.com</text><text x="873" y="229.500" textLength="465" lengthAdjust="spacingAndGlyphs">/537460467/46fdd62f24abbcc382e4446fea49cc07/Perfekt_4.jp</text></g>
              <rect x="1312" y="207" width="28" height="32" fill="url(#gFade)"/>
            </svg>
            <span class="zoom">30%</span>
            <svg class="ff-acts" viewBox="1402 206 116 34"><path d="M1409.500 210V236" stroke="#ddd"/><g fill="#555"><circle cx="1426.500" cy="222.500" r="2.400"/><circle cx="1434" cy="222.500" r="2.400"/><circle cx="1441.500" cy="222.500" r="2.400"/></g><path d="M1459 215.500H1476V222Q1475 230.500 1467.500 230.500 1460 230.500 1459 222Z" fill="none" stroke="#555" stroke-width="2.200"/><path d="M1463 220.500L1467.500 225 1472 220.500" fill="none" stroke="#555" stroke-width="2.200"/><path d="M1501 214L1503.600 219.500 1509.500 220.200 1505 224.200 1506.400 230.500 1501 227.300 1495.600 230.500 1497 224.200 1492.500 220.200 1498.400 219.500Z" fill="none" stroke="#4c4c4e" stroke-width="2.200"/></svg>
          </div>
          <svg class="ff-right" viewBox="1645 199 168 48">
            <path d="M1657 214V230M1661.500 214V230M1666 214V230M1668.500 215L1673 230" stroke="#4c4c4e" stroke-width="2.200"/>
            <rect x="1694" y="215.500" width="17.500" height="14" rx="2.500" fill="none" stroke="#4c4c4e" stroke-width="2.200"/><path d="M1703 216V229M1697 219H1701M1697 222H1701" stroke="#4c4c4e" stroke-width="1.500"/>
            <circle cx="1741" cy="222.500" r="7.500" fill="none" stroke="#4c4c4e" stroke-width="1.800"/><circle cx="1741" cy="220.500" r="3.200" fill="#4c4c4e"/><path d="M1736 227Q1741 222 1746 227L1741 229.500Z" fill="#4c4c4e"/><circle cx="1750.500" cy="214" r="3.800" fill="#27a5ea"/>
            <path d="M1764.500 203V237" stroke="#ddd"/><path d="M1783 216H1797.500M1783 222.500H1797.500M1783 229H1797.500" stroke="#4c4c4e" stroke-width="2.200"/>
          </svg>
        </div>

        <div class="viewer">
          <svg class="paper" viewBox="536 248 894 784">
            <defs>
              <filter id="soft" x="-20%" y="-20%" width="140%" height="140%"><feGaussianBlur stdDeviation="18"/></filter>
            </defs>
            <rect x="536" y="248" width="894" height="784" fill="#fefcf6"/>
            <g filter="url(#soft)">
              <path d="M660 250H1320V500H660Z" fill="#fbf7f2"/>
              <path d="M670 570H1310V810H670Z" fill="#faf6f0"/>
              <path d="M1210 275H1280V320H1210Z" fill="#fbf3ec"/>
              <path d="M690 830H880V960H690ZM1100 840H1400V930H1100Z" fill="#fefaf3"/>
            </g>
            <rect x="1423" y="248" width="7" height="784" fill="#fdfeff"/>
            <g fill="none" stroke="#c6c0b8" stroke-width="1">
              <path d="M652 612Q682 582 697 557 780 560 870 553.500 960 560 1062 558 1200 553 1325 553.500"/>
              <path d="M1299 249Q1336 258 1342 305" stroke="#d8d2ca"/><path d="M1325 553L1316 561" stroke="#ddd"/>
            </g>
            <g fill="#b9b2aa"><circle cx="697" cy="276" r="1.200"/><circle cx="570" cy="482" r="1"/><circle cx="1409" cy="484" r="1"/><circle cx="1406" cy="834" r="1.200"/><circle cx="1355" cy="570" r="1"/></g>

            <g class="letters">
              <text x="742" y="256" class="serif">9</text><text x="742" y="317">a</text><text x="742" y="347">b</text><text x="742" y="376.500">c</text><text x="742" y="406.500">d</text><text x="742" y="457">e</text><text x="742" y="487">f</text>
              <text x="671.500" y="639">a</text><text x="671.500" y="668.500">b</text><text x="671.500" y="698.500">c</text><text x="671.500" y="728">d</text><text x="671.500" y="757.500">e</text><text x="671.500" y="787">f</text>
            </g>
            <g class="heads">
              <text x="798" y="256.500" textLength="166" lengthAdjust="spacingAndGlyphs">Perfekt: Ergänzen Sie.</text>
              <text x="723" y="577.500" textLength="226" lengthAdjust="spacingAndGlyphs">Perfekt mit <tspan class="em">sein</tspan>. Ergänzen Sie.</text>
            </g>
            <g class="hint">
              <text x="793" y="284" textLength="58" lengthAdjust="spacingAndGlyphs">Beispiel:</text><text x="723" y="607.500" textLength="57.500" lengthAdjust="spacingAndGlyphs">Beispiel:</text>
            </g>
            <g class="hand">
              <text x="880" y="284.500" textLength="31" lengthAdjust="spacingAndGlyphs">habe</text><text x="1249" y="284.500" textLength="66" lengthAdjust="spacingAndGlyphs">getroffen</text>
              <text x="927" y="608" textLength="19" lengthAdjust="spacingAndGlyphs">ist</text><text x="1067" y="608" textLength="62" lengthAdjust="spacingAndGlyphs">geflogen</text>
              <text class="ten" x="690" y="583.500" textLength="18" lengthAdjust="spacingAndGlyphs">10</text>
            </g>
            <g class="body">
              <text x="855" y="284" textLength="21" lengthAdjust="spacingAndGlyphs">Ich</text><text x="916" y="284" textLength="328" lengthAdjust="spacingAndGlyphs">meinen Mann 2011 in einer Bibliothek (treffen)</text><text x="1315" y="284">.</text>
              <text x="793" y="316.500" textLength="25" lengthAdjust="spacingAndGlyphs">Wir</text><text x="896" y="316.500" textLength="177" lengthAdjust="spacingAndGlyphs">die Schokolade (nehmen)</text><text x="1171" y="316.500">.</text>
              <text x="793" y="346.500" textLength="51" lengthAdjust="spacingAndGlyphs">In Paris</text><text x="921.500" y="346.500" textLength="178" lengthAdjust="spacingAndGlyphs">ich drei Stunden (warten)</text><text x="1197" y="346.500">.</text>
              <text x="866.500" y="376" textLength="280" lengthAdjust="spacingAndGlyphs">ihr in Asien interessante Speisen (essen)</text><text x="1244.500" y="375">?</text>
              <text x="793" y="405.500" textLength="48" lengthAdjust="spacingAndGlyphs">Im Zug</text><text x="917.500" y="405" textLength="374" lengthAdjust="spacingAndGlyphs">Herr Meister seine Medikamente nicht sofort (finden)</text><text x="897" y="428">.</text>
              <text x="866.500" y="456.500" textLength="178" lengthAdjust="spacingAndGlyphs">du am Sonntag (arbeiten)</text><text x="1143" y="456">?</text>
              <text x="793" y="486.500" textLength="66.500" lengthAdjust="spacingAndGlyphs">Die Leute</text><text x="936" y="486" textLength="260" lengthAdjust="spacingAndGlyphs">das Schloss 20 Minuten lang (suchen)</text><text x="1294" y="486">.</text>

              <text x="785" y="607.500" textLength="138" lengthAdjust="spacingAndGlyphs">Am Freitag (fliegen)</text><text x="950" y="607.500" textLength="113" lengthAdjust="spacingAndGlyphs">Anja nach Dubai</text><text x="1129" y="607.500">.</text>
              <text x="722" y="639" textLength="164.500" lengthAdjust="spacingAndGlyphs">Gestern Abend (gehen)</text><text x="945" y="639.500" textLength="206" lengthAdjust="spacingAndGlyphs">wir bei Rot über die Kreuzung</text><text x="1292" y="639.500">.</text>
              <text x="778" y="669" textLength="235" lengthAdjust="spacingAndGlyphs">(schwimmen) ihr gestern im Fluss</text><text x="1153.500" y="668">?</text>
              <text x="722" y="698.500" textLength="198.500" lengthAdjust="spacingAndGlyphs">Am Wochenende (kommen)</text><text x="980" y="699" textLength="118.500" lengthAdjust="spacingAndGlyphs">meine Schwester</text><text x="1240" y="699">.</text>
              <text x="722" y="728" textLength="52.500" lengthAdjust="spacingAndGlyphs">Warum</text><text x="835" y="728" textLength="317" lengthAdjust="spacingAndGlyphs">(fahren) Sie denn mit dem Auto nach Istanbul</text><text x="1294" y="727.500">?</text>
              <text x="778" y="757.500" textLength="266.500" lengthAdjust="spacingAndGlyphs">(gehen) du gestern mit Stefan ins Kino</text><text x="1185.500" y="757">?</text>
              <text x="722" y="787" textLength="178.500" lengthAdjust="spacingAndGlyphs">Heute Morgen (kommen)</text><text x="960" y="787" textLength="73.500" lengthAdjust="spacingAndGlyphs">ich zu spät</text><text x="1173.500" y="787" textLength="111" lengthAdjust="spacingAndGlyphs">. Mein Chef war</text>
              <text x="722" y="808" textLength="71.500" lengthAdjust="spacingAndGlyphs">sehr böse.</text>
            </g>
            <path class="blanks" d="M880 287.500H911M1249 285.500H1316M823 319H891M1077 318.500H1170M849 348.500H917M1104 348H1197M793 378.500H862M1151 377.500H1243M845 408.500H914M793 429.500H897M793 459.500H862M1049 458.500H1142M864 489H932M1201 487.500H1294M927 609.500H950M1067 609.500H1129M890 641.500H941M1155 641.500H1292M722 670.500H774M1016 671.500H1153M924 700.500H975M1103 701H1240M779 729.500H831M1156 730.500H1292M722 759.500H774M1049 759.500H1184M904 789.500H955M1037 789.500H1173"/>
            <g class="answers">
              <text x="935" y="687.500" textLength="26" lengthAdjust="spacingAndGlyphs">ist</text><text x="1128" y="685.500" textLength="126" lengthAdjust="spacingAndGlyphs">gekommen</text>
              <text x="787" y="717.500" textLength="48" lengthAdjust="spacingAndGlyphs">sind</text><text x="1179.500" y="718.500" textLength="102" lengthAdjust="spacingAndGlyphs">gefahren</text>
              <text x="722" y="749.500" textLength="44" lengthAdjust="spacingAndGlyphs">Bist</text><text x="1063" y="745.500" textLength="115" lengthAdjust="spacingAndGlyphs">gegangen</text>
              <text x="916.500" y="781.500" textLength="35" lengthAdjust="spacingAndGlyphs">bin</text><text x="1057" y="774.500" textLength="126" lengthAdjust="spacingAndGlyphs">gekommen</text>
            </g>
            <path d="M1015 842Q1019 842 1019 845 1019 842 1023 842M1019 845V861M1015 864Q1019 864 1019 861 1019 864 1023 864" fill="none" stroke="#444" stroke-width="1.400"/>
          </svg>
          <div class="scroll">
            <svg viewBox="0 0 12 8"><path d="M1.500 6.500L6 2 10.500 6.500" fill="none" stroke="#555" stroke-width="2.200"/></svg>
            <span class="thumb"></span>
            <svg viewBox="0 0 12 8"><path d="M1.500 1.500L6 6 10.500 1.500" fill="none" stroke="#555" stroke-width="2.200"/></svg>
          </div>
        </div>

        <div class="pill">Anzeigen der Anwendung von Simone …</div>
        <div class="speaker">
          <span class="collapse"><svg viewBox="0 0 20 16"><path d="M2 2V14M18 8H5M10.500 2.500L5 8 10.500 13.500" fill="none" stroke="#fff" stroke-width="1.700"/></svg></span>
          <span class="who">Es spricht: Simone Durina-Sasdi</span>
        </div>
        <button class="mic" aria-label="Mikrofon"><svg viewBox="0 0 78 78"><rect x="32.500" y="24.500" width="13" height="24.500" rx="6.500" fill="none" stroke="#ef4a3a" stroke-width="1.700"/><path d="M39 49V53.500M34.500 53.500H43.500M26.500 49.500L52 24" stroke="#ef4a3a" stroke-width="1.700" fill="none"/></svg></button>
      </div>
    </section>
  </main>
</div>
</body>
</html>
```

FILE: styles.css
```css
* { box-sizing: border-box; }
body { margin: 0; width: 1920px; height: 1080px; overflow: hidden; font-family: "Open Sans", "Noto Sans", sans-serif; background: #fff; }
.defs { display: block; width: 0; height: 0; position: absolute; }
svg { display: block; flex: none; }
button { padding: 0; font: inherit; }

.desktop { display: grid; grid-template: 27px 1053px / 67px 1853px; }

/* desktop top bar */
.topbar { grid-column: 1 / 3; display: flex; align-items: center; background: linear-gradient(#57534c, #42403b); color: #dfdbd2; font-size: 14.300px; font-weight: 600; padding-left: 12px; white-space: nowrap; }
.activities { width: 89px; letter-spacing: .5px; }
.app-ico { width: 15px; height: 15px; margin-right: 6px; }
.appname { width: 177px; letter-spacing: .18px; }
.caret { width: 10px; height: 6px; }
.clock { margin-left: 646px; width: 757px; font-size: 14px; letter-spacing: .35px; }
.tray { width: 208px; height: 27px; }

/* dock */
.dock { background: linear-gradient(#523539, #4b3239 50%, #433136 85%, #3f3134); }
.dock-list { height: 989px; overflow: hidden; }
.dock-item { height: 64px; width: 67px; display: flex; align-items: center; padding-left: 9px; position: relative; }
.dock-item svg { width: 48px; height: 48px; }
.dock-item.active { background: linear-gradient(#6f5a5d, #6f5a5d) 2px 1px / 62px 62px no-repeat; }
.dock-item.running::before { content: ""; position: absolute; left: 2px; top: 29px; width: 6px; height: 6px; border-radius: 50%; background: #e95420; }
.apps { display: grid; grid-template-columns: repeat(3, 6px); gap: 6px; justify-content: center; padding: 17px 1px 0 0; }
.apps i { width: 6px; height: 6px; border-radius: 50%; background: #eee; }

/* browser window */
.browser { display: grid; grid-template-rows: 28px 34px 34px 36px 921px; }
.titlebar { display: flex; align-items: center; background: linear-gradient(#3c3a36, #4b4944); color: #dfdbd2; font-size: 14.300px; font-weight: 700; padding-left: 801px; }
.win-title { width: 991px; white-space: nowrap; letter-spacing: .1px; padding-bottom: 1px; }
.win-btns { display: flex; gap: 4px; }
.win-btns svg { width: 16px; height: 16px; }

.tabstrip { display: flex; background: #dee1e6; padding-left: 9px; }
.tabs { display: flex; align-items: center; }
.tabs i { width: 16px; height: 20px; border-right: 1px solid #8b8f94; display: flex; align-items: center; justify-content: center; font-style: normal; }
.tabs.narrow i { width: 15px; }
.tabs.narrow i:last-child { border-right: 0; }
.tabs.last i { width: 14px; }
.tabs svg { width: 11px; height: 16px; }
.tabs b { width: 11px; height: 16px; overflow: hidden; display: flex; align-items: center; justify-content: center; font: 700 12px/16px "Liberation Serif", serif; }
.tabs .y1 { color: #e8720c; font: 700 14px "Liberation Sans", sans-serif; }
.tabs .sc { background: #68b3e0; color: #fff; font: 700 7px "Liberation Sans", sans-serif; }
.tabs .q { color: #a82400; font-size: 13px; }
.tabs .hpi { background: #0d4f9a; color: #cfe2f5; font: 6px "Liberation Sans", sans-serif; align-items: flex-end; }
.tabs .y2 { background: #ff6600; color: #fff; font: 12px "Liberation Sans", sans-serif; }
.tabs .tc { background: #22a0dc; color: #fff; font: 700 9px "Liberation Sans", sans-serif; }
.tabs .lz { background: #f0870c; color: #2a1a08; font: 700 10px "Liberation Sans", sans-serif; border-radius: 5px; }
.tabs .w { background: #fff; color: #222; font-size: 11px; }
.tabs .ui { color: #1a3f80; font-size: 9px; }
.tabs .cw { background: #f01010; color: #fff; font: 700 6.500px "Liberation Sans", sans-serif; }
.tabs .gb { background: #0070b8; color: #fff; font: 700 12px Lato, sans-serif; }
.tabs .gt { background: #37bd98; color: #fff; font: 700 12px Lato, sans-serif; }
.tabs .aif { color: #15407a; font: 700 7px "Liberation Sans", sans-serif; }
.tabs .li { background: #0a74b4; color: #fff; font: 700 10px "Liberation Sans", sans-serif; }
.tabs .tds { background: #355876; color: #fff; font: 700 6px "Liberation Sans", sans-serif; }
.tabs .sg { background: #111; color: #f33; font: 700 8px "Liberation Sans", sans-serif; border-radius: 4px; }
.tabs .ml { color: #333; font-size: 6.500px; align-items: flex-end; border-top: 5px solid #7fb2dc; }
.tabs .d { background: #ffee00; color: #111; font-size: 14px; }
.tabs .m { background: #111; color: #fff; font-size: 11px; }
.tabs .ifi { background: #3c4fa8; color: #fff; font: 700 9px "Liberation Sans", sans-serif; }
.tabs .mb { background: #1878c0; color: #fff; font: 700 10px "Liberation Sans", sans-serif; }
.tabs .n { background: #333; color: #f46; font: 700 13px "Liberation Sans", sans-serif; }
.tabs .s { color: #777; font: 13px "Liberation Sans", sans-serif; border-top: 1px solid; border-bottom: 1px solid; }
.tabs .h { background: #fff; color: #e8542c; font: 700 13px "Liberation Sans", sans-serif; border-radius: 5px; border: 1px solid #c3a; }
.tabs .p { background: #1a9cf0; color: #fff; font: 13px "Liberation Sans", sans-serif; }
.tabs .z { background: #d01010; color: #fff; font: 13px "Liberation Sans", sans-serif; }
.tabs .ge { background: #3aa635; color: #fff; font: 700 9px "Liberation Sans", sans-serif; align-items: flex-end; }
.tab-active { width: 32px; background: #fff; border-radius: 8px 8px 0 0; display: flex; align-items: center; justify-content: center; padding-right: 2px; }
.tab-active svg { width: 9px; height: 9px; }
.newtab { width: 12px; height: 12px; margin: 11px 0 0 16px; }

.toolbar { display: flex; align-items: center; background: #fff; padding: 2px 0 0 6px; }
.toolbar > svg, .omnibox svg { width: 32px; height: 32px; }
.omnibox { width: 1400px; height: 28px; margin: 0 6px; border-radius: 14px; background: #f1f3f4; display: flex; align-items: center; }
.omnibox .lock { width: 9px; height: 12px; margin: 0 11px 0 14px; }
.omnibox .url { width: 1264px; height: 28px; margin-right: 4px; }
.url-text { font-size: 14px; fill: #6b6f74; }
.url-text .host { fill: #1e2124; }
.tool-sep { width: 1px; height: 16px; background: #c8cbcf; margin: 0 10px 0 6px; }
.toolbar > .avatar { width: 24px; height: 24px; margin-right: 4px; }

.bookmarks { display: flex; align-items: center; border-bottom: 1px solid #d6d8db; padding: 0 0 2px 15px; color: #3c4043; font-size: 14.500px; }
.bk { display: flex; align-items: center; gap: 9px; white-space: nowrap; }
.bk svg { width: 14px; height: 12px; }
.bk .glb { width: 15px; height: 15px; margin-right: -1px; }
.wide-label { letter-spacing: .25px; }
.w111 { width: 111px; } .w89 { width: 89px; } .w154 { width: 154px; } .w132 { width: 132px; } .w79 { width: 79px; }
.w103 { width: 103px; } .w54 { width: 54px; } .w77 { width: 77px; } .w72 { width: 72px; } .w106 { width: 106px; }
.grow { flex: 1; }
.more { width: 18px; font-size: 15px; }
.other { width: 170px; padding-left: 11px; border-left: 1px solid #d0d3d6; height: 16px; letter-spacing: .08px; }

/* meeting page */
.meeting { display: flex; background: #fff; }
.info { width: 50px; height: 50px; margin: 18px 34px 0 23px; border-radius: 50%; border: 2px solid #e8e8e8; background: #fff; display: flex; align-items: center; justify-content: center; flex: none; }
.info svg { width: 20px; height: 20px; }
.share { position: relative; width: 1639px; height: 921px; background: #2b292b; display: grid; grid-template-rows: 40px 49px 784px; }

.ff-tabs { display: flex; background: #22233f; color: #a5a5b8; font-size: 14px; }
.ff-tab { width: 270px; display: flex; align-items: center; padding-left: 11px; }
.ff-tab .emoji { width: 19px; height: 19px; margin-right: 7px; }
.ff-tab span { flex: 1; font-size: 14px; letter-spacing: -.15px; white-space: nowrap; overflow: hidden; }
.ff-tab .x { width: 12px; height: 12px; margin-right: 16px; }
.ff-tab.on { width: 269px; background: #f8f8fa; border-top: 3px solid #1583f0; color: #55565c; }
.ff-tab.on span { margin-right: 8px; padding-bottom: 2px; letter-spacing: -.3px; -webkit-mask-image: linear-gradient(90deg, #000 86%, transparent 102%); mask-image: linear-gradient(90deg, #000 86%, transparent 102%); }
.ff-tab.on .x { margin-right: 15px; }
.plus { width: 16px; height: 16px; margin: 11px 0 0 12px; }
.ff-win { display: flex; gap: 41px; margin: 12px 0 0 927px; }
.ff-win svg { width: 14px; height: 14px; }

.ff-nav { display: flex; align-items: center; background: #f7f7fa; border-bottom: 1px solid #cfcfd3; }
.ff-btn { width: 39px; height: 39px; margin-top: -2px; }
.ff-btn.back { margin-left: 4px; }
.ff-url { width: 1059px; height: 36px; margin: 0 126px 0 126px; border: 1px solid #cacace; background: #fff; display: flex; align-items: center; box-shadow: 0 1px 2px #ddd; }
.ff-addr { width: 880px; height: 34px; }
.ff-url-text text { font-size: 15.500px; fill: #85868a; }
.ff-url-text .dom { fill: #1a1a1e; }
.zoom { width: 47px; height: 20px; margin-left: 6px; border-radius: 10px; border: 1px solid #d4d4d8; background: #ececf0; color: #222; font-size: 13px; line-height: 19px; text-align: center; letter-spacing: -.4px; }
.ff-acts { width: 116px; height: 34px; margin-left: 8px; }
.ff-right { width: 168px; height: 48px; }

.viewer { display: flex; background: #212223; padding-left: 362px; }
.paper { width: 894px; height: 784px; margin-right: 362px; }
.scroll { width: 21px; background: #f0eff1; display: flex; flex-direction: column; align-items: center; padding: 6px 0; }
.scroll svg { width: 12px; height: 8px; }
.scroll .thumb { width: 18px; height: 458px; margin: 242px 0 56px; background: #cccbcd; }

/* scanned worksheet */
.paper .body, .paper .letters { font-family: Lato, sans-serif; font-size: 15.800px; fill: #4b4644; stroke: #4b4644; stroke-width: .25px; }
.paper .letters { fill: #605c58; stroke: #605c58; }
.paper .letters .serif { font-family: "Liberation Serif", serif; }
.paper .heads { font: 700 16px "Liberation Serif", serif; fill: #45413f; }
.paper .em { font-style: italic; }
.paper .hint { font: italic 15.800px Lato, sans-serif; fill: #827d79; }
.paper .hand { font: italic 16.500px Lato, cursive; fill: #7a7573; }
.paper .hand .ten { font-size: 20px; fill: #4a4644; }
.paper .blanks { stroke: #55504d; stroke-width: 1.400; fill: none; }
.paper .answers { font: 23px "Liberation Sans", sans-serif; fill: #0c0c10; stroke: #0c0c10; stroke-width: .5px; }

/* call controls floating over the shared screen */
.pill { position: absolute; left: 595px; top: 11px; width: 423px; height: 53px; border-radius: 27px; background: rgba(255, 255, 255, .81); border: 2px solid rgba(225, 225, 228, .8); color: #000; font: 20px/50px "Liberation Sans", sans-serif; padding-left: 14px; white-space: nowrap; letter-spacing: .53px; }
.speaker { position: absolute; left: 1311px; top: 57px; width: 360px; height: 42px; display: flex; color: #fff; font: 18px/42px "Liberation Sans", sans-serif; white-space: nowrap; border-radius: 4px; overflow: hidden; }
.collapse { width: 47px; background: rgba(90, 90, 90, .4); border-radius: 4px; display: flex; justify-content: flex-end; padding: 14px 13px 0 0; }
.collapse svg { width: 20px; height: 16px; }
.who { flex: 1; border-left: 3px solid rgba(255, 255, 255, .9); background: rgba(110, 110, 110, .36); background-clip: padding-box; padding-left: 10px; }
.mic { position: absolute; left: 784px; top: 822px; width: 78px; height: 78px; border-radius: 50%; border: 2px solid #ef4a3a; background: rgba(239, 74, 58, .13); }
.mic svg { width: 78px; height: 78px; margin: -2px; }
```
